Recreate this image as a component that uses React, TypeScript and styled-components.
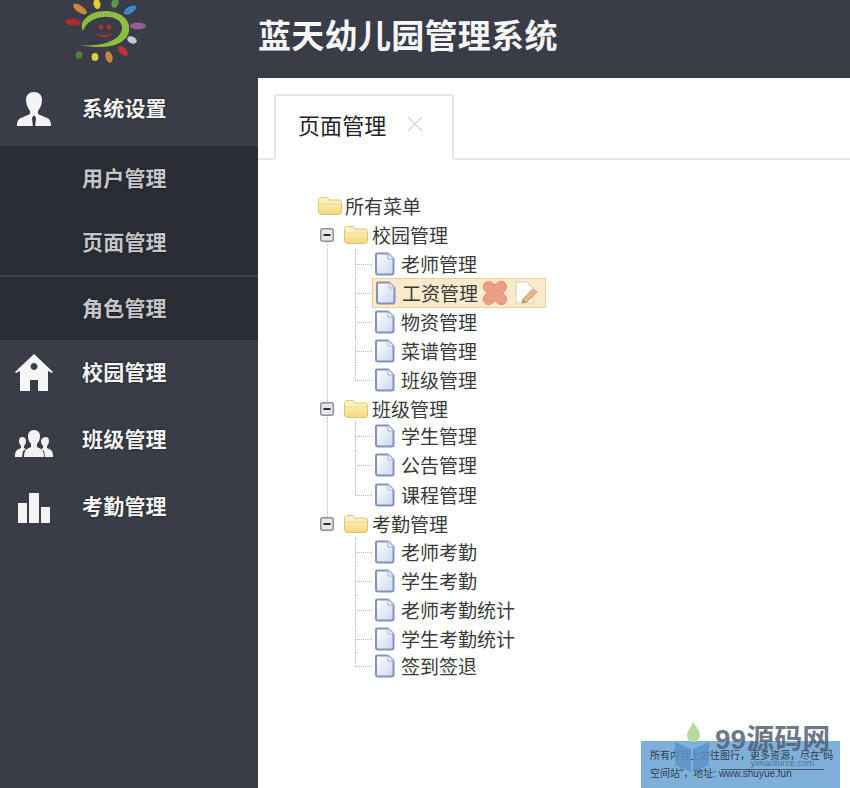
import React from "react";
import styled, { createGlobalStyle } from "styled-components";

const CJK = `"Noto Sans CJK SC", "Liberation Sans", sans-serif`;

const Global = createGlobalStyle`
  html, body { margin: 0; padding: 0; background: #fff; }
  body { font-family: ${CJK}; }
`;

const Page = styled.div`
  position: relative;
  width: 850px;
  height: 788px;
  overflow: hidden;
  display: grid;
  grid-template-columns: 258px 1fr;
  grid-template-rows: 78px 1fr;
  background: #fff;
`;

const Header = styled.header`
  grid-column: 1 / 3;
  display: flex;
  align-items: center;
  background: #3a3c48;
`;

const LogoSlot = styled.div`
  width: 258px;
  height: 78px;
  padding-left: 65px;
  box-sizing: border-box;
  flex: none;
`;

const Title = styled.h1`
  margin: 0 0 10px 0;
  font-size: 33px;
  line-height: 44px;
  font-weight: 700;
  color: #f6f6f6;
  letter-spacing: 0.3px;
  white-space: nowrap;
`;

const Sidebar = styled.nav`
  background: #3a3c48;
  display: flex;
  flex-direction: column;
`;

const MenuItem = styled.div<{ $h: number; $pb?: number }>`
  height: ${(p) => p.$h}px;
  padding-bottom: ${(p) => p.$pb ?? 0}px;
  box-sizing: border-box;
  display: flex;
  align-items: center;
`;

const IconCell = styled.span<{ $dy?: number }>`
  width: 82px;
  display: flex;
  justify-content: center;
  padding-right: 14px;
  padding-top: ${(p) => (p.$dy ?? 0) * 2}px;
  box-sizing: border-box;
  flex: none;
`;

const MenuLabel = styled.span`
  margin-top: -4px;
  font-size: 21px;
  font-weight: 700;
  line-height: 28px;
  letter-spacing: 0.2px;
  color: #f4f4f4;
  text-shadow: 0 0 2px #111;
  white-space: nowrap;
`;

const SubMenu = styled.div`
  background: #2b2d34;
  display: flex;
  flex-direction: column;
`;

const SubItem = styled.div<{ $h: number; $divider?: boolean }>`
  height: ${(p) => p.$h}px;
  box-sizing: border-box;
  padding-left: 82px;
  display: flex;
  align-items: center;
  border-bottom: ${(p) => (p.$divider ? "2px solid #3d3f4a" : "none")};
`;

const SubLabel = styled.span`
  margin-top: -4px;
  font-size: 21px;
  font-weight: 700;
  line-height: 28px;
  letter-spacing: 0.2px;
  color: #c4c5c8;
  text-shadow: 0 0 2px #111;
  white-space: nowrap;
`;

const Main = styled.main`
  background: #fff;
  display: flex;
  flex-direction: column;
  min-width: 0;
`;

const TabStrip = styled.div`
  height: 82px;
  box-sizing: border-box;
  padding: 16px 0 0 16px;
  border-bottom: 2px solid #e6e6e6;
  display: flex;
  align-items: flex-end;
`;

const Tab = styled.div`
  width: 180px;
  height: 66px;
  margin-bottom: -2px;
  box-sizing: border-box;
  border: 2px solid #e6e6e6;
  border-bottom: 2px solid #fff;
  background: #fff;
  padding: 0 0 6px 22px;
  display: flex;
  align-items: center;
  gap: 20px;
`;

const TabLabel = styled.span`
  font-size: 22px;
  line-height: 30px;
  letter-spacing: 0.1px;
  color: #222;
  white-space: nowrap;
`;

const Tree = styled.div`
  padding: 32px 0 0 59px;
  display: flex;
  flex-direction: column;
  color: #3a3a3a;
  font-size: 19px;
`;

const RootRow = styled.div`
  height: 28px;
  display: flex;
  align-items: center;
`;

const Branch = styled.div<{ $line?: boolean }>`
  position: relative;
  margin-left: 3px;
  &::before {
    content: "";
    position: absolute;
    left: 7px;
    top: 22px;
    bottom: -8px;
    border-left: ${(p) => (p.$line ? "1px dotted #b9b9b9" : "none")};
  }
`;

const BranchRow = styled.div<{ $h: number }>`
  height: ${(p) => p.$h}px;
  display: flex;
  align-items: center;
`;

const BranchName = styled.span<{ $gap: number }>`
  margin-left: ${(p) => p.$gap}px;
  line-height: 26px;
  white-space: nowrap;
`;

const Leaves = styled.div`
  margin-left: 35px;
  display: flex;
  flex-direction: column;
`;

const LeafRow = styled.div<{ $h: number }>`
  height: ${(p) => p.$h}px;
  display: flex;
  align-items: stretch;
`;

const Connector = styled.span<{ $last?: boolean }>`
  position: relative;
  width: 17px;
  flex: none;
  &::before {
    content: "";
    position: absolute;
    left: 0;
    top: 0;
    bottom: ${(p) => (p.$last ? "50%" : "0")};
    border-left: 1px dotted #b9b9b9;
  }
  &::after {
    content: "";
    position: absolute;
    left: 0;
    right: 0;
    top: 50%;
    border-top: 1px dotted #b9b9b9;
  }
`;

const LeafLabel = styled.span<{ $active?: boolean }>`
  display: inline-flex;
  align-items: center;
  align-self: ${(p) => (p.$active ? "center" : "stretch")};
  box-sizing: border-box;
  gap: 6px;
  height: ${(p) => (p.$active ? "30px" : "auto")};
  padding: ${(p) => (p.$active ? "0 0 0 3px" : "0 0 0 3px")};
  background: ${(p) => (p.$active ? "#fbeacb" : "transparent")};
  border: ${(p) => (p.$active ? "1px solid #f0cd90" : "none")};
  width: ${(p) => (p.$active ? "174px" : "auto")};
  color: #3a3a3a;
  white-space: nowrap;
`;

const LeafText = styled.span`
  line-height: 26px;
`;

const ActionIcons = styled.span`
  display: inline-flex;
  align-items: center;
  gap: 5px;
  margin-left: -3px;
`;

const Watermark = styled.aside`
  position: absolute;
  right: 10px;
  bottom: 0;
  width: 199px;
  height: 47px;
  box-sizing: border-box;
  padding: 6px 0 0 9px;
  background: #7fb0da;
  font-size: 10px;
  line-height: 18px;
  color: #2f3d4c;
  font-family: "Liberation Sans", ${CJK};
`;

const WatermarkLine = styled.div`
  white-space: nowrap;
`;

const BrandMark = styled.div`
  position: absolute;
  left: 674px;
  top: 722px;
  display: flex;
  align-items: flex-start;
  gap: 5px;
  pointer-events: none;
`;

const BrandText = styled.div`
  display: flex;
  flex-direction: column;
  align-items: center;
`;

const BrandName = styled.span`
  font-size: 28px;
  line-height: 36px;
  font-weight: 700;
  color: rgba(84, 95, 116, 0.85);
  white-space: nowrap;
  font-family: "Liberation Sans", ${CJK};
`;

const BrandSub = styled.span`
  font-size: 9px;
  line-height: 10px;
  color: rgba(60, 80, 110, 0.7);
  border-bottom: 1px solid rgba(40, 50, 70, 0.7);
  font-family: "Liberation Sans", sans-serif;
  padding: 0 10px 1px 30px;
`;

const Logo = () => {
  const petals: [number, number, number, string, number][] = [
    [32, 4, 5, "#e8d030", 78],
    [50, 3, 5, "#5d9a46", -70],
    [65, 10, 7, "#3f86c8", -30],
    [73, 26, 8, "#8f5f92", 0],
    [67, 40, 5, "#c8c8d0", 25],
    [58, 51, 6, "#b8333c", 45],
    [44, 57, 6, "#c68a3e", 75],
    [30, 57, 4, "#d8d040", 90],
    [14, 55, 4, "#4e7d3e", -70],
    [8, 22, 8, "#a82c32", 5],
    [15, 9, 8, "#c88a42", 35],
  ];
  return (
    <svg width="84" height="64" viewBox="0 0 84 64" aria-hidden="true">
      {petals.map(([x, y, r, c, a]) => (
        <ellipse key={x + "-" + y} cx={x} cy={y} rx={r} ry={3.4} fill={c} transform={`rotate(${a} ${x} ${y})`} />
      ))}
      <path
        d="M18 31C13 22 24 11 40 11C56 11 66 20 64 31C62 43 46 51 15 45C36 47 55 41 57 29C58 21 49 16 38 17C28 18 21 23 18 31Z"
        fill="#8ebc3c"
      />
      <circle cx="36" cy="27" r="2.2" fill="#b5302f" />
      <circle cx="44" cy="27" r="2.2" fill="#b5302f" />
      <path d="M31 33C36 36 43 36 48 32C46 38 35 39 31 33Z" fill="#b5302f" />
    </svg>
  );
};

const UserIcon = () => (
  <svg width="36" height="40" viewBox="0 0 36 40" aria-hidden="true">
    <path d="M18 1c5 0 8 3 8 8 0 5-2 8-4 11v3l9 4c3 1 4 4 4 8H1c0-4 1-7 4-8l9-4v-3c-2-3-4-6-4-11 0-5 3-8 8-8Z" fill="#f4f4f4" />
    <path d="M18 24l2 3-1 9h-2l-1-9Z" fill="#33353f" />
  </svg>
);

const HomeIcon = () => (
  <svg width="40" height="38" viewBox="0 0 40 38" aria-hidden="true">
    <path fillRule="evenodd" d="M20 0L39 18l-1 1-4-2v20H24V26h-8v11H6V17l-4 2-1-1ZM20 9a3.5 3.5 0 1 0 .01 0Z" fill="#f6f6f6" />
  </svg>
);

const GroupIcon = () => (
  <svg width="40" height="28" viewBox="0 0 40 28" aria-hidden="true">
    <g fill="#f2f2f2">
      <path d="M8 7c3 0 4 2 4 4s-1 4-2 5v2l2 1-3 2-1 6H1c0-5 1-7 4-8l2-1v-2c-1-1-2-3-2-5s1-4 3-4Z" />
      <path d="M32 7c2 0 3 2 3 4s-1 4-2 5v2l2 1c3 1 4 3 4 8h-8l-1-6-3-2 2-1v-2c-1-1-2-3-2-5s2-4 5-4Z" />
      <path d="M20 0c4 0 6 3 6 6s-1 6-3 8v3l4 2c2 1 3 4 3 8H10c0-4 1-7 3-8l4-2v-3c-2-2-3-5-3-8s2-6 6-6Z" />
    </g>
  </svg>
);

const BarsIcon = () => (
  <svg width="34" height="31" viewBox="0 0 34 31" aria-hidden="true">
    <g fill="#f4f4f4">
      <rect x="1" y="11" width="9" height="20" />
      <rect x="12" y="1" width="10" height="30" />
      <rect x="24" y="15" width="9" height="16" />
    </g>
  </svg>
);

const CloseIcon = () => (
  <svg width="18" height="18" viewBox="0 0 18 18" aria-hidden="true">
    <path d="M2 2l14 14M16 2L2 16" stroke="#d4d4d4" strokeWidth="1.2" fill="none" />
  </svg>
);

const Folder = () => (
  <svg width="26" height="20" viewBox="0 0 26 20" aria-hidden="true">
    <defs>
      <linearGradient id="fold" x1="0" y1="0" x2="0" y2="1">
        <stop offset="0" stopColor="#fff8cf" />
        <stop offset="1" stopColor="#f5d67c" />
      </linearGradient>
    </defs>
    <path d="M1.5 4.5C1.5 2.5 3 1.5 5 1.5h5l2 2.5h10c1.6 0 2.5 1 2.5 2.5V16c0 1.6-1 2.5-2.5 2.5H5C3 18.5 1.5 17.5 1.5 15.5Z" fill="url(#fold)" stroke="#e0c272" />
    <path d="M2 8h22" stroke="#f2d98f" />
  </svg>
);

const Expander = () => (
  <svg width="14" height="14" viewBox="0 0 14 14" aria-hidden="true" style={{ marginRight: 9, flex: "none" }}>
    <rect x="0.75" y="0.75" width="12.5" height="12.5" rx="2" fill="#e4e6ea" stroke="#8d9196" strokeWidth="1.5" />
    <path d="M3.5 7h7" stroke="#2c2c2c" strokeWidth="2" />
  </svg>
);

const FileIcon = () => (
  <svg width="20" height="24" viewBox="0 0 20 24" aria-hidden="true" style={{ flex: "none" }}>
    <defs>
      <linearGradient id="page" x1="0" y1="0" x2="1" y2="1">
        <stop offset="0" stopColor="#ffffff" />
        <stop offset="1" stopColor="#cbd6ee" />
      </linearGradient>
    </defs>
    <path d="M2 1.5h11l5.5 5.5v13.5c0 1-.8 2-2 2H3c-1.2 0-2-1-2-2V2.5c0-.6.4-1 1-1Z" fill="url(#page)" stroke="#8492c0" strokeWidth="2" />
    <path d="M13 1.5V7h5.5" fill="#eef1fa" stroke="#a9b4d6" />
  </svg>
);

const DeleteIcon = () => (
  <svg width="28" height="26" viewBox="0 0 28 26" aria-hidden="true">
    <path d="M4 3c3-3 6-2 10 2 4-4 7-5 10-2s2 6-2 10c4 4 5 7 2 10s-6 2-10-2c-4 4-7 5-10 2s-2-6 2-10C2 9 1 6 4 3Z" fill="#ec9e86" stroke="#e58d74" />
  </svg>
);

const EditIcon = () => (
  <svg width="24" height="24" viewBox="0 0 24 24" aria-hidden="true">
    <path d="M2 1h11l6 6v15H2Z" fill="#fdfdfa" stroke="#d9d2bd" strokeWidth="1.2" />
    <path d="M9 18l10-10 4 3-10 10-5 1Z" fill="#e9b98a" stroke="#cf9f73" />
    <path d="M8 22l1-4 3 3Z" fill="#a89a60" />
  </svg>
);

const WaterLogo = () => (
  <svg width="36" height="52" viewBox="0 0 36 52" aria-hidden="true">
    <path d="M19 0c4 6 7 9 7 13 0 4-3 7-7 7s-6-3-6-7c0-4 4-7 6-13Z" fill="#b6dc9c" />
    <path d="M1 20l16 7v23L1 43ZM35 20l-16 7v23l16-7Z" fill="#5d93c6" fillOpacity="0.85" />
  </svg>
);

type Leaf = { name: string; h: number; active?: boolean };
type BranchData = { name: string; h: number; line: boolean; leaves: Leaf[] };

const branches: BranchData[] = [
  {
    name: "校园管理",
    h: 29,
    line: true,
    leaves: [
      { name: "老师管理", h: 30 },
      { name: "工资管理", h: 28, active: true },
      { name: "物资管理", h: 30 },
      { name: "菜谱管理", h: 28 },
      { name: "班级管理", h: 30 },
    ],
  },
  {
    name: "班级管理",
    h: 27,
    line: true,
    leaves: [
      { name: "学生管理", h: 28 },
      { name: "公告管理", h: 30 },
      { name: "课程管理", h: 29 },
    ],
  },
  {
    name: "考勤管理",
    h: 29,
    line: false,
    leaves: [
      { name: "老师考勤", h: 28 },
      { name: "学生考勤", h: 29 },
      { name: "老师考勤统计", h: 30 },
      { name: "学生考勤统计", h: 27 },
      { name: "签到签退", h: 28 },
    ],
  },
];

export default function App() {
  return (
    <>
      <Global />
      <Page>
        <Header>
          <LogoSlot>
            <Logo />
          </LogoSlot>
          <Title>蓝天幼儿园管理系统</Title>
        </Header>
        <Sidebar>
          <MenuItem $h={68} $pb={6}>
            <IconCell $dy={2}><UserIcon /></IconCell>
            <MenuLabel>系统设置</MenuLabel>
          </MenuItem>
          <SubMenu>
            <SubItem $h={65}><SubLabel>用户管理</SubLabel></SubItem>
            <SubItem $h={66} $divider><SubLabel>页面管理</SubLabel></SubItem>
            <SubItem $h={63}><SubLabel>角色管理</SubLabel></SubItem>
          </SubMenu>
          <MenuItem $h={66}>
            <IconCell><HomeIcon /></IconCell>
            <MenuLabel>校园管理</MenuLabel>
          </MenuItem>
          <MenuItem $h={68}>
            <IconCell $dy={4}><GroupIcon /></IconCell>
            <MenuLabel>班级管理</MenuLabel>
          </MenuItem>
          <MenuItem $h={66}>
            <IconCell><BarsIcon /></IconCell>
            <MenuLabel>考勤管理</MenuLabel>
          </MenuItem>
        </Sidebar>
        <Main>
          <TabStrip>
            <Tab>
              <TabLabel>页面管理</TabLabel>
              <CloseIcon />
            </Tab>
          </TabStrip>
          <Tree>
            <RootRow>
              <Folder />
              <BranchName $gap={2}>所有菜单</BranchName>
            </RootRow>
            {branches.map((b) => (
              <Branch key={b.name} $line={b.line}>
                <BranchRow $h={b.h}>
                  <Expander />
                  <Folder />
                  <BranchName $gap={3}>{b.name}</BranchName>
                </BranchRow>
                <Leaves>
                  {b.leaves.map((l, i) => (
                    <LeafRow key={l.name} $h={l.h}>
                      <Connector $last={i === b.leaves.length - 1} />
                      <LeafLabel $active={l.active}>
                        <FileIcon />
                        <LeafText>{l.name}</LeafText>
                        {l.active && (
                          <ActionIcons>
                            <DeleteIcon />
                            <EditIcon />
                          </ActionIcons>
                        )}
                      </LeafLabel>
                    </LeafRow>
                  ))}
                </Leaves>
              </Branch>
            ))}
          </Tree>
        </Main>
        <Watermark>
          <WatermarkLine>所有内容上前往图行，更多资源，尽在“码</WatermarkLine>
          <WatermarkLine>空间站”，地址: www.shuyue.fun</WatermarkLine>
        </Watermark>
        <BrandMark>
          <WaterLogo />
          <BrandText>
            <BrandName>99源码网</BrandName>
            <BrandSub>yimaoforce.com</BrandSub>
          </BrandText>
        </BrandMark>
      </Page>
    </>
  );
}
